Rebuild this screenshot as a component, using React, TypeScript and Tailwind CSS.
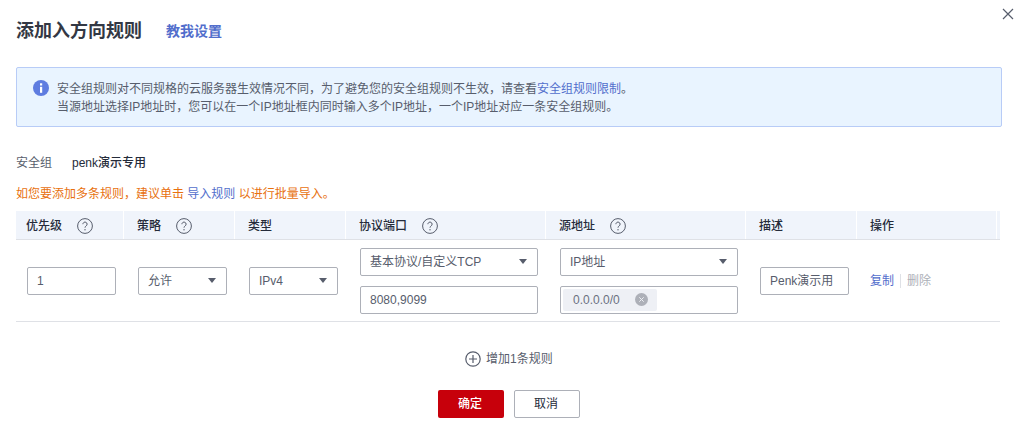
import React from "react";

const font = { fontFamily: '"Liberation Sans", "Noto Sans CJK SC", sans-serif' };

const HelpIcon = () => (
  <svg width="16" height="16" viewBox="0 0 16 16" fill="none" className="shrink-0">
    <circle cx="8" cy="8" r="7.4" stroke="#575d6c" strokeWidth="1" />
    <path d="M5.9 6.2a2.1 2.1 0 1 1 3.3 1.7c-.7.5-1.2.9-1.2 1.8" stroke="#575d6c" strokeWidth="1" />
    <circle cx="8" cy="11.7" r=".7" fill="#575d6c" />
  </svg>
);

const Caret = () => (
  <svg width="8" height="5" viewBox="0 0 8 5" className="shrink-0">
    <path d="M0 0h8L4 5z" fill="#575d6c" />
  </svg>
);

const Select: React.FC<{ value: string; className: string }> = ({ value, className }) => (
  <div
    className={`h-[28px] flex items-center justify-between pl-[9px] pr-[10px] border border-[#adb0b8] rounded-[2px] text-[#575d6c] ${className}`}
  >
    <span>{value}</span>
    <Caret />
  </div>
);

const Input: React.FC<{ value: string; className: string }> = ({ value, className }) => (
  <div className={`h-[28px] flex items-center pl-[9px] border border-[#adb0b8] rounded-[2px] text-[#575d6c] ${className}`}>
    {value}
  </div>
);

const columns = [
  { label: "优先级", help: true },
  { label: "策略", help: true },
  { label: "类型", help: false },
  { label: "协议端口", help: true },
  { label: "源地址", help: true },
  { label: "描述", help: false },
  { label: "操作", help: false },
];

const gridCols = "grid grid-cols-[107px_111px_111px_200px_200px_111px_140px_4px]";

export default function App() {
  return (
    <div className="relative w-[1029px] h-[431px] bg-white overflow-hidden text-[12px] text-[#575d6c]" style={font}>
      {/* close */}
      <svg width="12" height="12" viewBox="0 0 12 12" className="absolute left-[1002px] top-[8px]">
        <path d="M1 1l10 10M11 1L1 11" stroke="#575d6c" strokeWidth="1.2" fill="none" />
      </svg>

      <div className="px-4 pt-[18px]">
        <div className="flex items-center h-[26px]">
          <h1 className="text-[18px] leading-[26px] font-bold text-[#333844]">添加入方向规则</h1>
          <a className="ml-[24px] text-[14px] font-bold text-[#526ecc]">教我设置</a>
        </div>

        <div className="mt-[23px] w-[986px] h-[60px] flex items-center bg-[#e9f4ff] border border-[#b8ccf7] rounded-[2px] pl-[16px]">
          <svg width="16" height="16" viewBox="0 0 16 16" className="shrink-0 mr-[8px] -mt-[18px]">
            <circle cx="8" cy="8" r="8" fill="#5e7ce0" />
            <rect x="7" y="6.8" width="2.2" height="6" fill="#fff" />
            <rect x="7" y="3.3" width="2.2" height="2.2" fill="#fff" />
          </svg>
          <div className="leading-[18px] pt-[1px]">
            <div>
              安全组规则对不同规格的云服务器生效情况不同，为了避免您的安全组规则不生效，请查看
              <a className="text-[#526ecc]">安全组规则限制</a>。
            </div>
            <div>当源地址选择IP地址时，您可以在一个IP地址框内同时输入多个IP地址，一个IP地址对应一条安全组规则。</div>
          </div>
        </div>

        <div className="mt-[27px] flex h-[18px] items-center">
          <span className="w-[56px]">安全组</span>
          <span className="text-[#252b3a] font-medium">penk演示专用</span>
        </div>

        <div className="mt-[13px] h-[18px] leading-[18px] text-[#e8710f]">
          如您要添加多条规则，建议单击 <a className="text-[#526ecc]">导入规则</a> 以进行批量导入。
        </div>

        <div className="mt-[8px] w-[984px]">
          <div className={`${gridCols} h-[29px] bg-[#f0f4fb] border-b border-[#dfe1e6] font-medium text-[#252b3a]`}>
            {columns.map((col, i) => (
              <div
                key={col.label}
                className={`flex items-center gap-[15px] pt-[1px] ${i === 0 ? "pl-[10px]" : "pl-[13px] border-l-[1px] border-white"}`}
              >
                <span>{col.label}</span>
                {col.help && <HelpIcon />}
              </div>
            ))}
            <div className="border-l border-white" />
          </div>

          <div className={`${gridCols} h-[82px] border-b border-[#dfe1e6] items-center`}>
            <div className="pl-[11px]">
              <Input value="1" className="w-[89px]" />
            </div>
            <div className="pl-[15px]">
              <Select value="允许" className="w-[89px]" />
            </div>
            <div className="pl-[15px]">
              <Select value="IPv4" className="w-[89px]" />
            </div>
            <div className="pl-[15px] flex flex-col gap-[10px]">
              <Select value="基本协议/自定义TCP" className="w-[178px]" />
              <Input value="8080,9099" className="w-[178px]" />
            </div>
            <div className="pl-[15px] flex flex-col gap-[10px]">
              <Select value="IP地址" className="w-[178px]" />
              <div className="w-[178px] h-[28px] flex items-center pl-[2px] border border-[#adb0b8] rounded-[2px]">
                <div className="w-[94px] h-[22px] flex items-center justify-between pl-[10px] pr-[9px] bg-[#eef0f5] rounded-[2px]">
                  <span className="text-[#6b7180]">0.0.0.0/0</span>
                  <svg width="13" height="13" viewBox="0 0 13 13">
                    <circle cx="6.5" cy="6.5" r="6.5" fill="#adb0b8" />
                    <path d="M4.3 4.3l4.4 4.4M8.7 4.3L4.3 8.7" stroke="#eef0f5" strokeWidth="1" />
                  </svg>
                </div>
              </div>
            </div>
            <div className="pl-[15px]">
              <Input value="Penk演示用" className="w-[89px]" />
            </div>
            <div className="pl-[14px] flex items-center">
              <a className="text-[#526ecc]">复制</a>
              <span className="mx-[6px] w-px h-[14px] bg-[#dfe1e6]" />
              <a className="text-[#adb0b8]">删除</a>
            </div>
            <div />
          </div>
        </div>

        <div className="mt-[27px] ml-[449px] flex items-center gap-[5px] h-[20px] text-[#575d6c]">
          <svg width="16" height="16" viewBox="0 0 16 16" fill="none">
            <circle cx="8" cy="8" r="7.2" stroke="#575d6c" strokeWidth="1.2" />
            <path d="M8 4v8M4 8h8" stroke="#575d6c" strokeWidth="1.2" />
          </svg>
          <span>增加1条规则</span>
        </div>

        <div className="mt-[21px] ml-[422px] flex gap-[10px]">
          <button className="w-[66px] h-[28px] bg-[#c7000b] rounded-[2px] text-white font-medium pr-[2px]">确定</button>
          <button className="w-[66px] h-[28px] border border-[#adb0b8] rounded-[2px] text-[#252b3a] pr-[2px]">取消</button>
        </div>
      </div>
    </div>
  );
}
